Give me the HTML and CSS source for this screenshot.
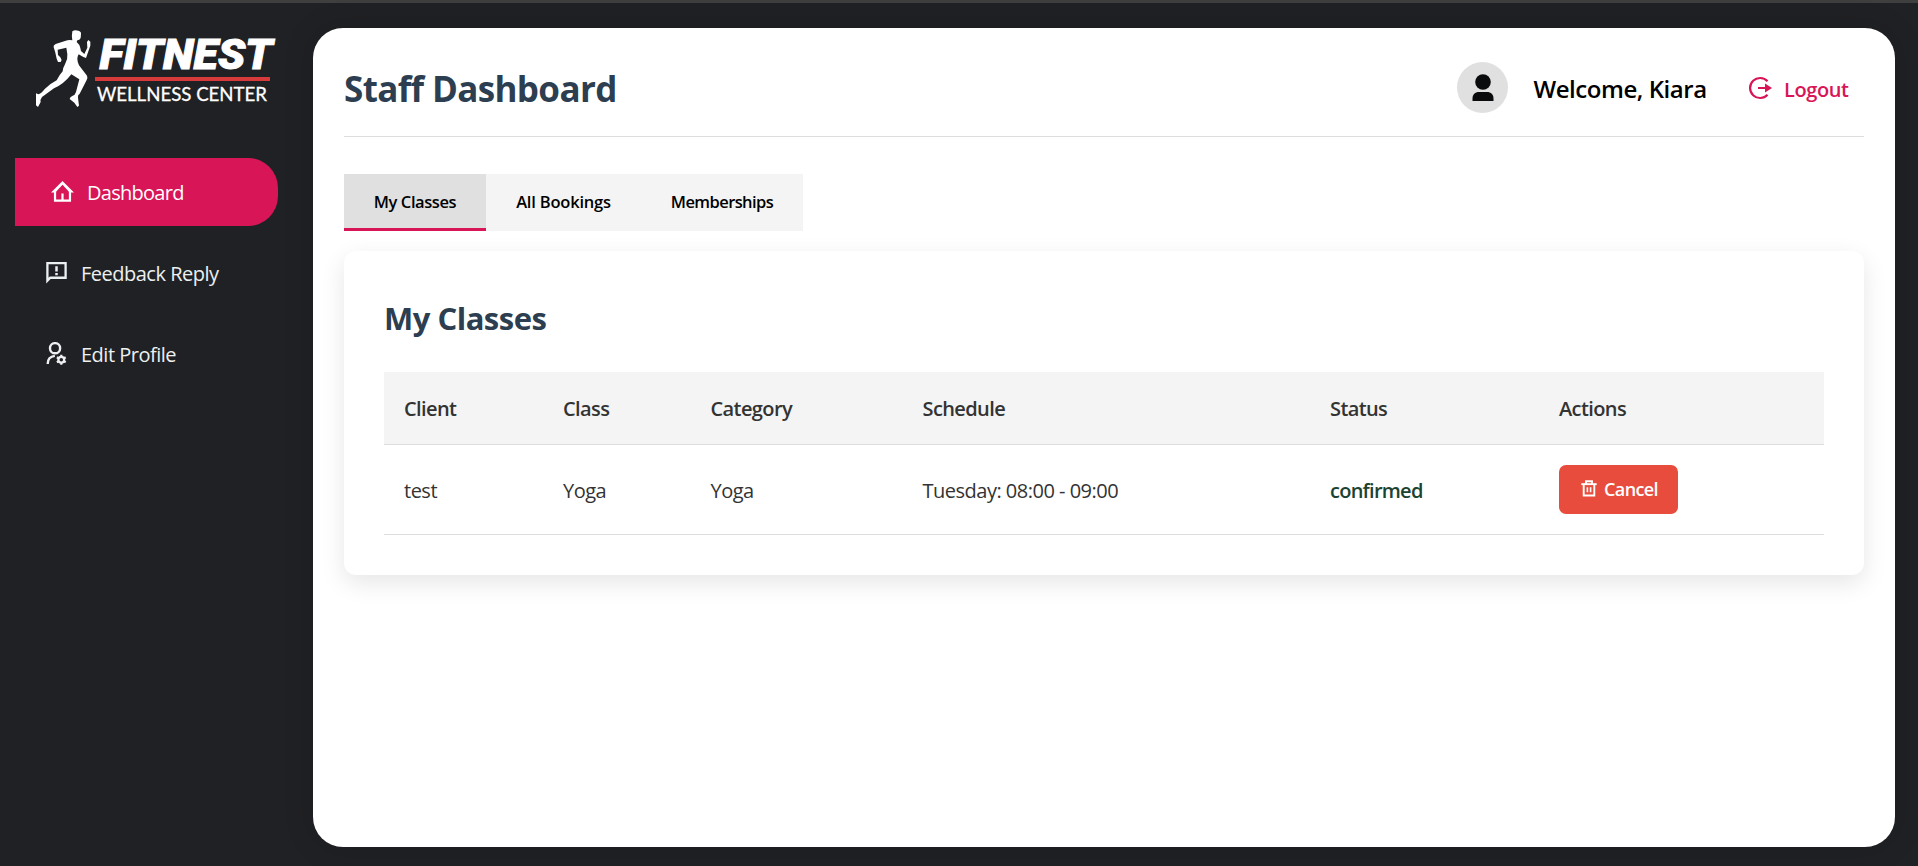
FILE: index.html
```html
<!DOCTYPE html>
<html lang="en">
<head>
<meta charset="utf-8">
<title>Staff Dashboard</title>
<link rel="stylesheet" href="styles.css">
</head>
<body>
<div class="app">
  <aside class="sidebar">
    <svg class="logo" viewBox="30 20 250 95" role="img" aria-label="Fitnest Wellness Center">
      <g transform="translate(30 20) scale(.33333)" fill="#fff">
        <path d="M127 34Q134 28 145 32Q154 34 153 42L152 54Q149 61 142 61L140 66Q148 72 151 84L153 93L163 102L172 83L171 66L175 60L181 65L181 77L168 114L160 111L146 103Q142 109 142 116Q142 125 147 136L171 167Q174 174 170 180L149 221Q142 226 144 233L147 257L142 261L133 248L119 237Q119 231 128 227Q135 226 138 216L148 178L124 163Q101 193 72 205L36 231Q30 239 32 246L24 261L18 256L18 220L25 223Q33 221 45 206Q61 191 80 181Q88 165 98 154Q99 143 105 133Q114 118 112 103L109 83L83 89L84 105L91 112Q97 119 92 126L84 126L80 116Q76 95 71 82Q69 76 77 72L105 63Q116 59 127 61Q124 51 127 34Z"/>
      </g>
      <text class="logo-name" x="99.5" y="69" textLength="173" lengthAdjust="spacingAndGlyphs">FITNEST</text>
      <rect x="95" y="77" width="175" height="4" fill="#d83a3b"/>
      <text class="logo-sub" x="97" y="101" textLength="170" lengthAdjust="spacingAndGlyphs">WELLNESS CENTER</text>
    </svg>
    <nav class="nav">
      <a class="nav-item active">
        <svg class="nav-icon" viewBox="0 0 24 24"><path d="M4.200 11v10.500h15.600V11M12 21v-7" fill="none" stroke="currentColor" stroke-width="2.300"/><path d="M0 13 12 1l12 12h-4.500L12 5l-7.500 8z" fill="currentColor"/></svg>
        <span>Dashboard</span>
      </a>
      <a class="nav-item">
        <svg class="nav-icon" viewBox="0 0 24 24"><path d="M2.500 20.500V2.300h19v15.200H5.500L2.500 20.500z" fill="none" stroke="currentColor" stroke-width="2.400"/><path d="M10.700 5.500h2.600v5.500h-2.600zM10.700 12.500h2.600v2.300h-2.600z" fill="currentColor"/></svg>
        <span>Feedback Reply</span>
      </a>
      <a class="nav-item">
        <svg class="nav-icon" viewBox="0 0 24 24"><g fill="none" stroke="currentColor"><circle cx="10.500" cy="6.500" r="5.300" stroke-width="2.500"/><path d="M2.800 23c0-4.500 2.500-8 7.500-8.500" stroke-width="2.500"/><circle cx="17" cy="18.500" r="3" stroke-width="2.300"/><path d="M17 13.200v1.900M17 21.900v1.900M12.400 15.900l1.700 1M19.900 20.100l1.700 1M12.400 21.100l1.700-1M19.900 16.900l1.700-1" stroke-width="2.300"/></g></svg>
        <span>Edit Profile</span>
      </a>
    </nav>
  </aside>
  <main class="main">
    <header class="header">
      <h1>Staff Dashboard</h1>
      <div class="user">
        <span class="avatar"><svg viewBox="0 0 22 28"><circle cx="11" cy="8" r="7.800"/><path d="M.5 27v-2.500c0-4 2.500-6.500 6.500-6.500h8c4 0 6.500 2.500 6.500 6.500V27z"/></svg></span>
        <span class="welcome">Welcome, Kiara</span>
        <a class="logout">
          <svg viewBox="0 0 24 24"><path d="M19.500 5.300A10 10 0 1 0 19.500 18.700" fill="none" stroke="currentColor" stroke-width="2.200"/><path d="M10 11h7V7.500l7 4.500-7 4.500V13h-7z" fill="currentColor"/></svg>
          <span>Logout</span>
        </a>
      </div>
    </header>
    <div class="tabs">
      <button class="tab tab-classes selected">My Classes</button>
      <button class="tab tab-bookings">All Bookings</button>
      <button class="tab tab-members">Memberships</button>
    </div>
    <section class="card">
      <h2>My Classes</h2>
      <table>
        <colgroup><col class="c-client"><col class="c-class"><col class="c-category"><col class="c-schedule"><col class="c-status"><col class="c-actions"></colgroup>
        <thead><tr><th>Client</th><th>Class</th><th>Category</th><th>Schedule</th><th>Status</th><th>Actions</th></tr></thead>
        <tbody><tr>
          <td>test</td><td>Yoga</td><td>Yoga</td><td>Tuesday: 08:00 - 09:00</td>
          <td><span class="status">confirmed</span></td>
          <td class="actions"><button class="cancel"><svg viewBox="0 0 16 17"><path d="M5 4V1.300h6V4M2.700 4v11.500h10.600V4" fill="none" stroke="currentColor" stroke-width="1.900"/><path d="M6.400 7.200v5M9.600 7.200v5" stroke="currentColor" stroke-width="1.600"/><path d="M.3 3.200h15.400v1.900H.3z" fill="currentColor"/></svg><span>Cancel</span></button></td>
        </tr></tbody>
      </table>
    </section>
  </main>
</div>
</body>
</html>
```
FILE: styles.css
```css
* { box-sizing: border-box; }
body {
  margin: 0;
  background: #202124;
  color: #333;
  font-family: "Open Sans", "Noto Sans", sans-serif;
  font-size: 20px;
}
.app {
  display: flex;
  height: 866px;
  border-top: 3px solid #3e3f3e;
}
.sidebar { width: 313px; padding: 17px 0 0 15px; }
.logo { display: block; width: 250px; height: 95px; margin-left: 15px; }
.logo-name { font: italic 900 42px Roboto, sans-serif; fill: #fff; stroke: #fff; stroke-width: 1px; }
.logo-sub { font: 400 18.800px Lato, sans-serif; fill: #fff; stroke: #fff; stroke-width: 0.3px; }
.nav { display: flex; flex-direction: column; gap: 13px; margin-top: 43px; }
.nav-item {
  display: flex;
  align-items: center;
  gap: 13px;
  width: 263px;
  height: 68px;
  padding-left: 30px;
  color: #ecf0f1;
  letter-spacing: -0.5px;
}
.nav-item.active {
  padding-left: 36px;
  border-radius: 0 30px 30px 0;
  background: #d81557;
  color: #fff;
  letter-spacing: -0.72px;
}
.nav-icon { width: 23px; height: 23px; margin-top: -2px; }
.main {
  width: 1582px;
  height: 819px;
  margin-top: 25px;
  padding: 31px;
  border-radius: 30px;
  background: #fff;
  box-shadow: 0 0 30px rgba(0, 0, 0, 0.15);
}
.header {
  display: flex;
  justify-content: space-between;
  align-items: center;
  height: 78px;
  padding-bottom: 20px;
  border-bottom: 1px solid #ddd;
}
h1, h2 { margin: 0; color: #2c3e50; font-weight: 700; }
h1 { padding-top: 2px; font-size: 35px; letter-spacing: -0.64px; }
.user { display: flex; align-items: center; padding-right: 15px; }
.avatar {
  display: flex;
  align-items: center;
  justify-content: center;
  width: 51px;
  height: 51px;
  border-radius: 50%;
  background: #e0e0e0;
}
.avatar svg { width: 22px; height: 28px; fill: #0a0b0d; }
.welcome {
  width: 214px;
  padding: 2px 0 0 25.500px;
  color: #000;
  font-size: 24px;
  font-weight: 600;
  letter-spacing: -0.45px;
  white-space: nowrap;
}
.logout { display: flex; align-items: center; width: 127px; padding-left: 26px; gap: 12px; color: #d81557; font-weight: 600; letter-spacing: -0.4px; }
.logout svg { width: 24px; height: 24px; }
.logout span { padding-top: 3px; }
.tabs { display: flex; margin-top: 37px; }
.tab {
  height: 57px;
  padding: 1px 0 0;
  border: 0;
  border-bottom: 3px solid #f4f4f4;
  background: #f4f4f4;
  color: #000;
  font: 600 16.500px "Open Sans", sans-serif;
}
.tab.selected { border-bottom-color: #d81557; background: #e0e0e0; }
.tab-classes { width: 142px; letter-spacing: -0.42px; }
.tab-bookings { width: 155px; letter-spacing: -0.2px; }
.tab-members { width: 162px; letter-spacing: -0.58px; }
.card {
  height: 324px;
  margin-top: 20px;
  padding: 40px;
  border-radius: 12px;
  background: #fff;
  box-shadow: 0 8px 25px rgba(0, 0, 0, 0.1);
}
h2 { margin-bottom: 27px; font-size: 31px; line-height: 54px; letter-spacing: -0.5px; }
table { width: 1440px; table-layout: fixed; border-collapse: separate; border-spacing: 0; letter-spacing: -0.5px; }
.c-client { width: 159px; }
.c-class { width: 147.500px; }
.c-category { width: 212px; }
.c-schedule { width: 407.500px; }
.c-status { width: 229px; }
.c-actions { width: 285px; }
th, td { padding: 0 20px; border-bottom: 1px solid #ddd; text-align: left; }
th { height: 73px; background: #f4f4f4; font-weight: 600; letter-spacing: -0.6px; }
td { height: 90px; padding-top: 1px; }
td.actions { padding-top: 0; }
.status { color: #1b4332; font-weight: 600; letter-spacing: -0.75px; }
.cancel {
  display: flex;
  align-items: center;
  gap: 7px;
  width: 119px;
  height: 49px;
  padding: 0 0 0 22px;
  border: 0;
  border-radius: 7px;
  background: #e74c3c;
  color: #fff;
  font: 600 18px "Open Sans", sans-serif;
  letter-spacing: -0.6px;
}
.cancel svg { width: 16px; height: 17px; margin-top: -2px; }
.cancel span { margin-top: -1px; }
```
